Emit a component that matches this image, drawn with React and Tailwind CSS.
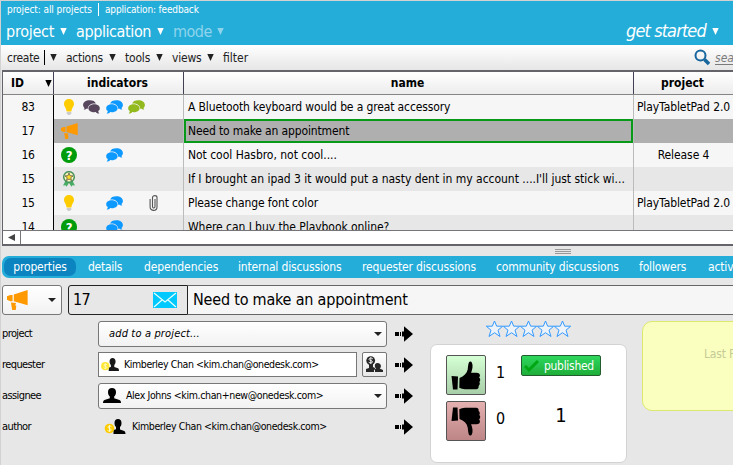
import React from 'react';

const TABS = [
  { label: 'details', className: 'ml-[12px] w-[35px] tracking-[-0.25px]' },
  { label: 'dependencies', className: 'ml-[21px] w-[73px] tracking-[-0.1px]' },
  { label: 'internal discussions', className: 'ml-[21px] w-[103px] tracking-[-0.15px]' },
  { label: 'requester discussions', className: 'ml-[21px] w-[114px] tracking-[-0.15px]' },
  { label: 'community discussions', className: 'ml-[20px] w-[122px] tracking-[-0.15px]' },
  { label: 'followers', className: 'ml-[21px] w-[48px] tracking-[-0.15px]' },
  { label: 'activities', className: 'ml-[21px] w-[60px] tracking-[-0.15px]' },
];

const ROWS = [
  { id: 83, icons: ['bulb', 'dark', 'blue', 'green'], name: 'A Bluetooth keyboard would be a great accessory', project: 'PlayTabletPad 2.0', tracking: 'tracking-[-0.13px]' },
  { id: 17, icons: ['horn'], name: 'Need to make an appointment', project: '', selected: true, tracking: 'tracking-[-0.14px]' },
  { id: 16, icons: ['question', null, 'blue'], name: 'Not cool Hasbro, not cool....', project: 'Release 4', tracking: 'tracking-[-0.03px]' },
  { id: 15, icons: ['award'], name: "If I brought an ipad 3 it would put a nasty dent in my account ....I'll just stick wi...", project: '', tracking: 'tracking-[-0.02px]' },
  { id: 15, icons: ['bulb', null, 'blue', 'clip'], name: 'Please change font color', project: 'PlayTabletPad 2.0', tracking: 'tracking-[-0.13px]' },
  { id: 14, icons: ['question', null, 'blue'], name: 'Where can I buy the Playbook online?', project: '', tracking: 'tracking-[-0.06px]' },
];

const Caret = ({ className = '' }) => (
  <svg className={`shrink-0 ${className}`} width="7" height="7" viewBox="0 0 7 7">
    <path d="M0.3 0h6.4L3.5 7z" fill="currentColor" />
  </svg>
);

const DropArrow = () => (
  <svg width="8" height="4" viewBox="0 0 8 4" className="shrink-0">
    <path d="M0 0h8L4 4z" fill="#222" />
  </svg>
);

const Bulb = () => (
  <svg width="16" height="16" viewBox="0 0 16 16">
    <path d="M8 0C4.8 0 3 2.3 3 5c0 2.600 2.200 3.600 2.600 7.500h4.800C10.800 8.600 13 7.600 13 5c0-2.700-1.800-5-5-5z" fill="#ffcc00" />
    <path d="M5.700 13h4.600v1.500L9 16H7l-1.300-1.500z" fill="#ccc" />
  </svg>
);

const Chat = ({ color, flip }) => (
  <svg width="17" height="14" viewBox="0 0 17 14" className={flip ? '-scale-x-100' : ''}>
    <path
      d="M10.500 0.300C7 .3 4.700 1.500 4.200 3.600c4.200-.5 8 1.500 8 5.200.6 0 1 0 1.500-.1.700.7 1.600 1 2.700.9-.6-.6-.9-1.100-.9-1.700 1-.8 1.400-1.800 1.400-2.900C16.900 2 14 .3 10.500.3z"
      fill={color}
    />
    <path
      d="M5.700 4.200C2.500 4.200.2 5.800.2 8.200c0 1.300.6 2.200 1.600 2.900 0 1-.4 1.800-1.100 2.500 1.600 0 2.700-.5 3.600-1.500 4 .5 7.300-1.200 7.300-3.900 0-2.300-2.700-4-5.900-4z"
      fill={color}
    />
  </svg>
);

const Horn = ({ className = 'w-[17px] h-[16px]' }) => (
  <svg className={className} viewBox="0 0 17 16" fill="#ff9900">
    <path d="M5.500 3.500L16.700 0v12.200L5.500 9zM4.500 4v5H2.700L0 7.800V5l2.700-1zM3.200 10l4.100.4-.6 2 .8.300-.4 3.300H4.200z" />
  </svg>
);

const Question = () => (
  <span className="flex w-4 h-4 items-center justify-center rounded-full bg-[#009c0b] text-white text-[13px] leading-none font-bold">
    ?
  </span>
);

const Award = () => (
  <svg width="14" height="16" viewBox="0 0 14 16">
    <path d="M4 9L1 14.500l2.500-.3 1 1.500L7 12l2.500 3.700 1-1.500 2.500.3L10 9z" fill="#49ad65" />
    <circle cx="7" cy="6" r="5.300" fill="#fff9bc" stroke="#49915c" strokeWidth="1.500" />
    <path d="M7 2l1.100 2.700 2.900.2-2.200 1.800.7 2.900L7 8 4.500 9.600l.7-2.900L3 4.900l2.900-.2z" fill="#ffdb29" stroke="#444" strokeWidth=".7" />
  </svg>
);

const Clip = () => (
  <svg width="9" height="16" viewBox="0 0 9 16" fill="none" stroke="#555" strokeWidth="1.100">
    <path d="M6 4v7.500c0 2-2.500 2-2.500 0v-9c0-2.500 4.500-2.500 4.500 0v9.500c0 4.500-6.900 4.500-6.900 0V4" />
  </svg>
);

const RowIcon = ({ kind }) => {
  switch (kind) {
    case 'bulb': return <Bulb />;
    case 'dark': return <Chat color="#57465c" flip />;
    case 'blue': return <Chat color="#0d99ff" />;
    case 'green': return <Chat color="#92b91e" />;
    case 'horn': return <Horn />;
    case 'question': return <Question />;
    case 'award': return <Award />;
    case 'clip': return <Clip />;
    default: return null;
  }
};

const PERSON = 'M9 0C6.500 0 5 1.600 5 4c0 2 .7 3.600 1.800 4.500v1.700L1.500 12C.5 12.400 0 13.500 0 15h18c0-1.500-.5-2.600-1.500-3l-5.300-1.800V8.500C12.300 7.600 13 6 13 4c0-2.400-1.500-4-4-4z';

const Person = () => (
  <svg width="18" height="15" viewBox="0 0 18 15" className="shrink-0">
    <path d={PERSON} />
  </svg>
);

const Customer = ({ className, coin }) => (
  <svg className={`shrink-0 ${className}`} viewBox="0 0 21 15">
    <path d="M13.500 0C11.300 0 10 1.500 10 4c0 1.800.6 3.300 1.500 4v2.300L9 11v4h12c0-2-.7-3-2-3.300l-3.500-1.200V8c1-.7 1.500-2.200 1.500-4 0-2.500-1.300-4-3.500-4z" />
    <circle cx="5" cy="9.500" r="4.800" fill={coin} />
    <path d="M7 7.700C5.500 6.500 3.500 7 3.500 8.200c0 1.600 3.200 1 3.200 2.700 0 1.300-2.300 1.700-3.700.5M5 6.200v6.600" fill="none" stroke="#fff9c8" strokeWidth="1" />
  </svg>
);

const CustomerPair = () => (
  <svg width="17" height="17" viewBox="0 0 17 17" fill="#262626">
    <path d="M3 8h4v3l2 1v4H0v-3l3-1zM11.500 7c-2 0-3 1.500-2.600 3.400.1 1 .7 1.800 1.300 2.100L8 13.500V16h9v-2l-3.300-1.500c.6-.4 1.100-1.100 1.200-2.100C15.200 8.500 13.500 7 11.500 7z" />
    <circle cx="4.700" cy="4.600" r="4.400" />
    <path d="M6.800 2.800C5.300 1.600 3 2 3 3.300c0 1.600 3.500 1 3.500 2.500 0 1.300-2.300 1.600-3.800.5M4.800 1.200v6.800" fill="none" stroke="#eee" strokeWidth="1" />
  </svg>
);

const MoveArrow = () => (
  <svg width="18" height="16" viewBox="0 0 18 16" className="shrink-0">
    <path d="M0 6h4v4H0zM5 6h1v4H5zM7 5.500h2V.3L18 8l-9 7.700v-5.200H7z" />
  </svg>
);

const Thumb = ({ down }) => (
  <svg width="30" height="29" viewBox="0 0 30 29" className={down ? '-scale-y-100' : ''}>
    <path d="M.5 15L7 15.500 6.500 28.500H2z" />
    <path d="M8.500 17c4.500-1.600 7.300-4.400 8.200-8.400.4-2.600.4-5 1.200-7C18.400.3 20 0 20.700 1.200c1.600 2.800.8 7-.6 10.600 3 .1 5.200-.1 7 .3 2.100.6 2.500 3.100 1 4.500 1.500 1.200 1.500 3.400.2 4.400.9 1.300.6 3-.7 3.900.4 1.900-.5 3.300-2.500 3.400H14c-2.500 0-3.800-1-5.700-1.500z" />
  </svg>
);

const Star = () => (
  <svg width="17" height="18" viewBox="0 0 17 18">
    <path d="M8.500 1l2.200 5.200h6L12 10.200l2 6.300-5.500-3.800L3 16.500l2-6.300L.3 6.200h6z" fill="#edf3f9" stroke="#3399ff" strokeWidth="1" />
  </svg>
);

const Field = ({ label, children }) => (
  <div className="flex h-[31px] items-center">
    <span className="w-[96px] shrink-0 pt-[2px] text-[11px] tracking-[-0.6px]">{label}</span>
    <div className="flex w-[297px] shrink-0 items-center">{children}</div>
    <MoveArrow />
  </div>
);

const Header = () => (
  <header className="h-[44px] shrink-0 bg-[#25add9] text-white">
    <div className="flex h-[17px] items-center pl-[6px] text-[10px] whitespace-nowrap *:shrink-0">
      <span className="w-[91px] tracking-[-0.07px]">project: all projects</span>
      <span className="h-[13px] w-px bg-white" />
      <span className="ml-[6px] tracking-[-0.15px]">application: feedback</span>
    </div>
    <div className="flex h-[27px] items-center pl-[5px] text-[16px] whitespace-nowrap *:shrink-0">
      <span className="w-[49px] tracking-[-0.25px]">project</span>
      <Caret className="ml-[5px]" />
      <span className="ml-[9px] w-[76px] tracking-[-0.4px]">application</span>
      <Caret className="ml-[5px]" />
      <span className="ml-[9px] w-[40px] tracking-[-0.5px] text-[#8ed4ec]">mode</span>
      <Caret className="ml-[4px] text-[#8ed4ec]" />
      <span className="ml-[402px] w-[82px] pb-[3px] text-[18px] italic tracking-[-0.9px]">get started</span>
      <Caret className="ml-[4px]" />
    </div>
  </header>
);

const Toolbar = () => (
  <div className="flex h-[25px] shrink-0 items-center bg-linear-to-b from-white to-[#e6e6e6] pl-[6px] text-[12px] text-[#222] *:shrink-0">
    <span className="w-[33px] tracking-[-0.3px]">create</span>
    <span className="ml-[4px] h-[15px] w-px bg-black" />
    <Caret className="ml-[5px]" />
    <span className="ml-[9px] w-[38px] tracking-[-0.3px]">actions</span>
    <Caret className="ml-[5px]" />
    <span className="ml-[9px] w-[26px] tracking-[-0.2px]">tools</span>
    <Caret className="ml-[5px]" />
    <span className="ml-[9px] w-[30px] tracking-[-0.2px]">views</span>
    <Caret className="ml-[5px]" />
    <span className="ml-[9px] w-[25px] tracking-[0px]">filter</span>
    <svg width="17" height="17" viewBox="0 0 17 17" className="ml-[446px]" fill="none" stroke="#17669d">
      <circle cx="6.500" cy="6.500" r="5" strokeWidth="2" />
      <path d="M10.500 10.500l4.500 4.500" strokeWidth="3.500" />
    </svg>
    <span className="ml-[4px] text-[12px] italic text-[#7b7b7b] underline underline-offset-2">search</span>
  </div>
);

const Grid = () => (
  <section className="ml-[1px] flex h-[176px] shrink-0 flex-col overflow-hidden border-y-2 border-l border-[#66646b] bg-white">
    <div className="flex h-[23px] w-[780px] shrink-0 border-b border-[#858585] bg-linear-to-b from-white to-[#ececec] text-[12px] font-bold">
      <div className="flex w-[51px] shrink-0 items-center border-r border-[#424052] pl-[8px]">
        <span className="w-[16px]">ID</span>
        <Caret className="ml-[18px]" />
      </div>
      <div className="flex w-[130px] items-center justify-center border-r border-[#424052] pr-[2px] pb-px">indicators</div>
      <div className="flex w-[450px] items-center justify-center border-r border-[#424052] pr-[2px]">name</div>
      <div className="flex w-[99px] items-center justify-center pr-[2px]">project</div>
    </div>
    <div className="h-[135px] w-[780px] shrink-0 overflow-hidden text-[12px]">
      {ROWS.map((row, i) => (
        <div key={i} className={`flex h-6 ${i % 2 ? 'bg-[#e7e7e7]' : 'bg-[#f6f6f6]'}`}>
          <div className={`flex w-[51px] items-center justify-center border-r border-black tracking-[-0.3px] ${i % 2 ? 'bg-[#f6f6f6]' : ''}`}>{row.id}</div>
          <div className={`flex w-[130px] items-center border-r border-[#bbb] pl-[4px] ${row.selected ? 'bg-[#afafaf]' : ''}`}>
            {row.icons.map((kind, k) => (
              <span key={k} className={`flex items-center justify-center ${kind === 'clip' ? 'ml-[17px] w-[22.500px]' : 'w-[22.500px]'}`}>
                <RowIcon kind={kind} />
              </span>
            ))}
          </div>
          <div
            className={`flex w-[450px] items-center whitespace-nowrap border-r border-[#bbb] ${row.tracking} ${
              row.selected ? 'bg-[#afafaf]' : ''
            }`}
          >
            <span className={`flex h-full w-full items-center ${row.selected ? 'border-2 border-[#079a18] pl-[2px]' : 'pl-[4px]'}`}>{row.name}</span>
          </div>
          <div className={`flex w-[99px] items-center justify-center whitespace-nowrap tracking-[-0.08px] ${row.selected ? 'bg-[#afafaf]' : ''}`}>
            {row.project}
          </div>
          <div className={`flex-1 ${row.selected ? 'bg-[#afafaf]' : ''}`} />
        </div>
      ))}
    </div>
    <div className="flex h-[14px] shrink-0 border-t border-[#77757a] bg-white">
      <div className="flex w-[18px] items-center justify-center border-r border-[#77757a]">
        <svg width="7" height="7" viewBox="0 0 7 7">
          <path d="M7 0v7L0 3.500z" fill="#444" />
        </svg>
      </div>
    </div>
  </section>
);

const Properties = () => (
  <section className="flex w-[429px] shrink-0 flex-col pl-[1px] pt-[3px]">
    <Field label="project">
      <div className="flex h-[26px] w-[289px] items-center justify-between rounded-[3px] border border-[#777] bg-linear-to-b from-white to-[#f2f2f2] pl-[10px] pr-[4px] text-[11px] italic">
        <span className="pt-px tracking-[0.15px]">add to a project...</span>
        <DropArrow />
      </div>
    </Field>
    <Field label="requester">
      <div className="flex h-[25px] w-[259px] items-center border border-[#777] bg-white pl-[2px] text-[10.5px]">
        <Customer className="w-[18px] h-[13px] opacity-90" coin="#ffe51c" />
        <span className="ml-[5px] whitespace-nowrap tracking-[-0.4px]">Kimberley Chan &lt;kim.chan@onedesk.com&gt;</span>
      </div>
      <div className="ml-[5px] flex h-[25px] w-[25px] items-center justify-center rounded-[2px] border border-[#777] bg-linear-to-b from-white to-[#e7e7e7]">
        <CustomerPair />
      </div>
    </Field>
    <Field label="assignee">
      <div className="flex h-[26px] w-[289px] items-center rounded-[3px] border border-[#777] bg-linear-to-b from-white to-[#f2f2f2] pl-[4px] pr-[4px] text-[10.5px]">
        <Person />
        <span className="ml-[5px] mr-auto pt-px whitespace-nowrap tracking-[-0.36px]">Alex Johns &lt;kim.chan+new@onedesk.com&gt;</span>
        <DropArrow />
      </div>
    </Field>
    <Field label="author">
      <div className="flex items-center pl-[6px] text-[10.5px]">
        <Customer className="w-[22px] h-[15px]" coin="#fc0" />
        <span className="ml-[6px] whitespace-nowrap tracking-[-0.4px]">Kimberley Chan &lt;kim.chan@onedesk.com&gt;</span>
      </div>
    </Field>
  </section>
);

const Votes = () => (
  <section className="flex w-[197px] shrink-0 flex-col items-center pt-[5px]">
    <div className="flex h-[18px]">
      {[0, 1, 2, 3, 4].map((n) => (
        <Star key={n} />
      ))}
    </div>
    <div className="mt-[6px] flex h-[119px] w-full rounded-[7px] border border-[#d3d3d3] bg-white pl-[15px] pt-[10px]">
      <div className="flex flex-col gap-[6px]">
        <div className="flex h-[40px] w-[40px] items-center justify-center rounded-[2px] border border-[#555] bg-linear-to-b from-[#d5ffd5] to-[#a8cfa8]">
          <Thumb />
        </div>
        <div className="flex h-[40px] w-[40px] items-center justify-center rounded-[2px] border border-[#555] bg-linear-to-b from-[#e5b0b0] to-[#bd8585]">
          <Thumb down />
        </div>
      </div>
      <div className="ml-[10px] flex w-[25px] flex-col text-[16px] leading-[20px]">
        <span className="mt-[8px]">1</span>
        <span className="mt-[26px]">0</span>
      </div>
      <div className="flex w-[80px] flex-col items-center">
        <div className="flex h-[21px] w-[80px] items-center rounded-[2px] border border-[#235c2f] bg-linear-to-b from-[#2fd75d] to-[#1eae39] pl-[2px] text-[12px] text-white">
          <svg width="15" height="12" viewBox="0 0 15 12" className="shrink-0">
            <path d="M1 6l4 4L14 1" fill="none" stroke="#00a713" strokeWidth="3" />
          </svg>
          <span className="ml-[5px] tracking-[-0.3px]">published</span>
        </div>
        <span className="mt-[26px] text-[20px] leading-[26px]">1</span>
      </div>
    </div>
  </section>
);

const App = () => (
  <div className="flex h-[465px] w-[733px] flex-col overflow-hidden border-l border-t border-[#d2d2d2] bg-[#e7e7e7] font-['DejaVu_Sans_Condensed','DejaVu_Sans',sans-serif] text-black">
    <Header />
    <Toolbar />
    <Grid />
    <div className="flex h-[10px] shrink-0 flex-col gap-px pl-[554px] pt-[3px]">
      <span className="h-px w-[16px] bg-[#999]" />
      <span className="h-px w-[16px] bg-[#999]" />
      <span className="h-px w-[16px] bg-[#999]" />
    </div>
    <nav className="ml-[1px] flex h-[22px] shrink-0 items-center whitespace-nowrap rounded-l-[7px] bg-[#25add9] pl-[2px] text-[12px] text-white">
      <span className="flex h-[18px] w-[72px] shrink-0 items-center justify-center rounded-[7px] bg-[#0b84c0] tracking-[-0.15px]">properties</span>
      {TABS.map((tab) => (
        <span key={tab.label} className={`shrink-0 ${tab.className}`}>{tab.label}</span>
      ))}
    </nav>
    <div className="mt-[7px] ml-[1px] flex h-[30px] shrink-0">
      <div className="flex w-[60px] shrink-0 items-center justify-between rounded-[3px] border border-[#777] bg-linear-to-b from-white to-[#f2f2f2] pl-[4px] pr-[5px]">
        <Horn className="h-[20px] w-[21px]" />
        <DropArrow />
      </div>
      <div className="ml-[6px] flex w-[120px] shrink-0 items-center justify-between rounded-l-[3px] border border-[#222] pl-[4px] pr-[10px] text-[16px]">
        <span className="tracking-[-0.6px]">17</span>
        <svg width="24" height="16" viewBox="0 0 24 16">
          <path d="M0 0h24v16H0z" fill="#00c9ff" />
          <path d="M1 1l11 9L23 1M1 15l8-7M23 15l-8-7" fill="none" stroke="#e7ffff" strokeWidth="1.200" />
        </svg>
      </div>
      <div className="flex flex-1 items-center border-y border-[#666] bg-[#f6f6f6] pl-[5px] text-[16px] tracking-[-0.2px]">Need to make an appointment</div>
    </div>
    <main className="flex flex-1">
      <Properties />
      <Votes />
      <aside className="ml-[15px] mt-[6px] h-[90px] w-[160px] shrink-0 rounded-[10px] border border-[#dce96e] bg-[#faffbf] pl-[61px] pt-[23px] text-[12px] tracking-[-0.2px] whitespace-nowrap text-[#c5ca98]">
        Last Release
      </aside>
    </main>
  </div>
);

export default App;
